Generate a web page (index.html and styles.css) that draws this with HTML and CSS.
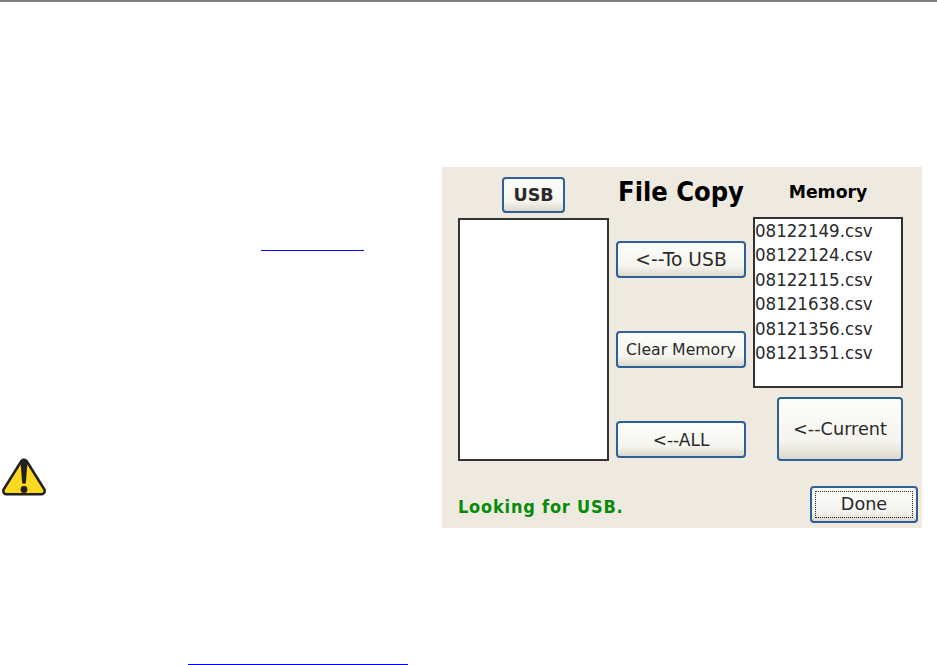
FILE: index.html
```html
<!DOCTYPE html>
<html lang="en">
<head>
<meta charset="utf-8">
<title>File Copy</title>
<link rel="stylesheet" href="styles.css">
</head>
<body>
<div class="rule"></div>
<main class="page">
  <section class="side">
    <a class="link link-top" href="#" aria-label="link"></a>
    <svg class="warn" viewBox="0 0 48 40" width="48" height="40" aria-hidden="true">
      <path d="M23 5 L40.5 33 H5.5 Z" fill="#fbd91e" stroke="#231f20" stroke-width="9" stroke-linejoin="round"/>
      <path d="M23 5 L40.5 33 H5.5 Z" fill="#fbd91e" stroke="#fbd91e" stroke-width="4" stroke-linejoin="round"/>
      <path d="M19.4 3 H26.6 L24.8 25.5 H21.2 Z" fill="#231f20"/>
      <circle cx="23" cy="31.5" r="3.4" fill="#231f20"/>
    </svg>
  </section>
  <section class="panel">
    <div class="cols">
      <div class="col col-usb">
        <button class="btn btn-usb" type="button">USB</button>
        <div class="list list-usb"></div>
      </div>
      <div class="col col-mid">
        <h1 class="title">File Copy</h1>
        <button class="btn btn-action btn-tousb" type="button">&lt;--To USB</button>
        <button class="btn btn-action btn-clear" type="button">Clear Memory</button>
        <button class="btn btn-action btn-all" type="button">&lt;--ALL</button>
      </div>
      <div class="col col-mem">
        <h2 class="mem-title">Memory</h2>
        <ul class="list list-mem">
          <li>08122149.csv</li>
          <li>08122124.csv</li>
          <li>08122115.csv</li>
          <li>08121638.csv</li>
          <li>08121356.csv</li>
          <li>08121351.csv</li>
        </ul>
        <button class="btn btn-current" type="button">&lt;--Current</button>
      </div>
    </div>
    <div class="foot">
      <span class="status">Looking for USB.</span>
      <button class="btn btn-done" type="button"><span class="focus">Done</span></button>
    </div>
  </section>
</main>
<a class="link link-bottom" href="#" aria-label="link"></a>
</body>
</html>
```
FILE: styles.css
```css
html, body {
  margin: 0;
  padding: 0;
  background: #fff;
}
body {
  width: 937px;
  height: 665px;
  overflow: hidden;
  font-family: "DejaVu Sans", sans-serif;
  color: #111;
}
.rule {
  height: 2px;
  background: #808080;
}
.page {
  display: flex;
  align-items: flex-start;
  padding-top: 165px;
}
.side {
  width: 442px;
  flex: none;
  display: flex;
  flex-direction: column;
  height: 361px;
}
.link {
  display: block;
  border-bottom: 1px solid #0000ff;
}
.link-top {
  width: 103px;
  margin: 83px 0 0 261px;
}
.warn {
  margin: 207px 0 0 1px;
}
.link-bottom {
  width: 220px;
  margin: 136px 0 0 188px;
}
.panel {
  width: 480px;
  height: 361px;
  flex: none;
  background: #eeeadf;
  display: flex;
  flex-direction: column;
  padding: 10px 4px 5px 16px;
  box-sizing: border-box;
}
.cols {
  display: flex;
  gap: 7px;
  height: 309px;
}
.col {
  display: flex;
  flex-direction: column;
}
.col-usb {
  width: 151px;
  align-items: center;
}
.col-mid {
  width: 130px;
}
.col-mem {
  width: 150px;
  align-items: flex-end;
}
.btn {
  font-family: inherit;
  color: #2a2a2a;
  border: 2px solid #2f5f94;
  border-radius: 4px;
  background: linear-gradient(#fdfdfb 0%, #f5f4ef 70%, #dcd8cc 100%);
  padding: 0;
  box-sizing: border-box;
  font-size: 17px;
  flex: none;
}
.btn-usb {
  width: 63px;
  height: 36px;
  font-size: 17.5px;
  font-weight: bold;
}
.list {
  border: 2px solid #333;
  background: #fff;
  box-sizing: border-box;
  width: 100%;
}
.list-usb {
  height: 243px;
  margin-top: 5px;
}
.title {
  margin: 0;
  height: 51px;
  font-family: "DejaVu Sans Condensed", "DejaVu Sans", sans-serif;
  font-size: 27px;
  line-height: 30px;
  font-weight: bold;
  color: #000;
  text-align: center;
  white-space: nowrap;
}
.btn-action {
  width: 130px;
  height: 37px;
  margin-top: 13px;
}
.btn-clear, .btn-all {
  margin-top: 53px;
}
.btn-tousb {
  font-size: 18.7px;
}
.btn-clear {
  font-size: 15.7px;
}
.mem-title {
  margin: 0;
  width: 100%;
  height: 40px;
  font-size: 17.3px;
  line-height: 30px;
  font-weight: bold;
  color: #000;
  text-align: center;
}
.list-mem {
  height: 171px;
  margin: 0;
  padding: 0;
  list-style: none;
  font-family: "DejaVu Sans Condensed", "DejaVu Sans", sans-serif;
  font-size: 18.5px;
  line-height: 24.4px;
  color: #2a2a2a;
}
.btn-current {
  width: 126px;
  height: 64px;
  margin-top: 9px;
  font-size: 17.7px;
}
.foot {
  display: flex;
  justify-content: space-between;
  align-items: center;
}
.status {
  font-family: "DejaVu Sans Condensed", "DejaVu Sans", sans-serif;
  font-size: 18px;
  font-weight: bold;
  color: #0a8a0a;
  letter-spacing: 0.8px;
  padding-top: 3px;
}
.btn-done {
  width: 108px;
  height: 37px;
  padding: 3px;
  font-size: 17.6px;
}
.focus {
  display: block;
  height: 100%;
  line-height: 25px;
  border: 1px dotted #222;
  box-sizing: border-box;
}
```
